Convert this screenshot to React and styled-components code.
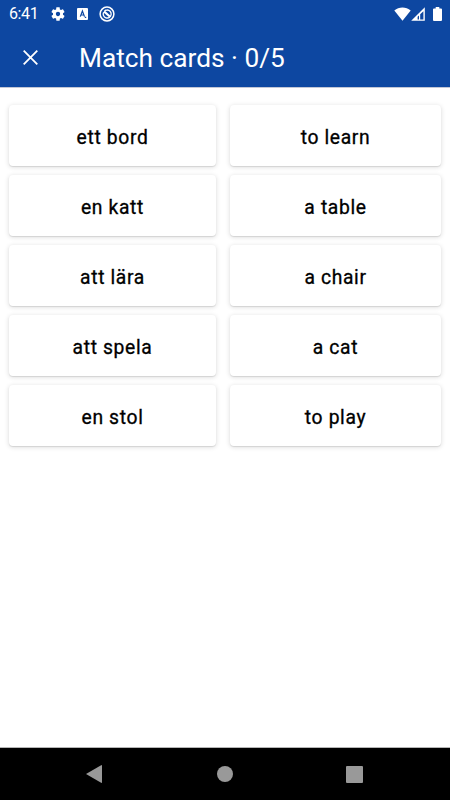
import styled, { createGlobalStyle } from "styled-components";

const pairs = [
  ["ett bord", "to learn"],
  ["en katt", "a table"],
  ["att lära", "a chair"],
  ["att spela", "a cat"],
  ["en stol", "to play"],
];

export default function App() {
  return (
    <>
      <GlobalStyle />
      <Screen>
        <StatusBar>
          <Clock>6:41</Clock>
          <Notifications>
            <svg width="16" height="16" viewBox="0 0 24 24" fill="#fff">
              <path d="M19.43 12.98c.04-.32.07-.64.07-.98s-.03-.66-.07-.98l2.11-1.65c.19-.15.24-.42.12-.64l-2-3.46c-.12-.22-.39-.3-.61-.22l-2.49 1c-.52-.4-1.08-.73-1.69-.98l-.38-2.65C14.46 2.18 14.25 2 14 2h-4c-.25 0-.46.18-.49.42l-.38 2.65c-.61.25-1.17.59-1.69.98l-2.49-1c-.23-.09-.49 0-.61.22l-2 3.46c-.13.22-.07.49.12.64l2.11 1.65c-.04.32-.07.65-.07.98s.03.66.07.98l-2.11 1.65c-.19.15-.24.42-.12.64l2 3.46c.12.22.39.3.61.22l2.49-1c.52.4 1.08.73 1.69.98l.38 2.65c.03.24.24.42.49.42h4c.25 0 .46-.18.49-.42l.38-2.65c.61-.25 1.17-.59 1.69-.98l2.49 1c.23.09.49 0 .61-.22l2-3.46c.12-.22.07-.49-.12-.64l-2.11-1.65zM12 15.2c-1.77 0-3.2-1.43-3.2-3.2s1.43-3.2 3.2-3.2 3.2 1.43 3.2 3.2-1.43 3.2-3.2 3.2z" />
            </svg>
            <svg width="11" height="12" viewBox="0 0 11 12">
              <rect width="11" height="12" rx="1" fill="#fff" />
              <path d="M3.3 8.6 5.4 3 7.5 8.6M4 7H6.8M7.8 9.4h1.4" fill="none" stroke="#0d47a1" strokeWidth="1.2" />
            </svg>
            <svg width="16" height="16" viewBox="0 0 16 16" fill="none" stroke="#fff">
              <circle cx="8" cy="8" r="6.9" strokeWidth="1.5" />
              <path d="M4.6 6.2A4 4 0 1 0 8 4c-1 0-1.8.3-2.5.8" strokeWidth="1.3" />
              <path d="m5 5.4 5.8 5.1" strokeWidth="2.2" />
            </svg>
          </Notifications>
          <Signals>
            <svg width="17" height="14" viewBox="0 0 17 14" fill="#fff">
              <path d="M.3 3.6C4.9-.4 12.1-.4 16.7 3.6L8.5 13.7z" />
            </svg>
            <svg width="14" height="14" viewBox="0 0 14 14">
              <path fillRule="evenodd" d="M.2 13.7 13.8.2v13.5zM8 12.4V8.4L6.6 9.8v2.6zM9.2 12.4h3.2V4.2L9.2 7.2z" fill="#fff" />
            </svg>
            <Battery width="9" height="14" viewBox="0 0 9 14" fill="#fff">
              <path d="M2.7 0h3.6v1.4H8q1 0 1 1V13q0 1-1 1H1q-1 0-1-1V2.4q0-1 1-1h1.7z" />
            </Battery>
          </Signals>
        </StatusBar>
        <Toolbar>
          <CloseButton aria-label="Close">
            <svg width="15" height="15" viewBox="0 0 15 15" stroke="#fff" strokeWidth="1.8">
              <path d="m.7.7 13.6 13.6M14.3.7.7 14.3" />
            </svg>
          </CloseButton>
          <Title>Match cards · 0/5</Title>
        </Toolbar>
        <Board>
          {pairs.flat().map((word) => (
            <Card key={word}>{word}</Card>
          ))}
        </Board>
        <NavBar>
          <svg width="17" height="18" viewBox="0 0 17 18" fill="#999">
            <path d="M0 9 15.1.2q.9-.4.9.5v16.6q0 .9-.9.5z" />
          </svg>
          <HomeDot />
          <RecentsSquare />
        </NavBar>
      </Screen>
    </>
  );
}

const GlobalStyle = createGlobalStyle`
  * {
    box-sizing: border-box;
  }
  body {
    margin: 0;
    font-family: Roboto, sans-serif;
  }
`;

const Screen = styled.div`
  display: flex;
  flex-direction: column;
  width: 450px;
  height: 800px;
  overflow: hidden;
  background-color: #fff;
`;

const StatusBar = styled.div`
  display: flex;
  align-items: center;
  height: 27px;
  padding: 0 8px 0 9px;
  color: #fff;
  background-color: #0d47a1;
`;

const Clock = styled.span`
  width: 41px;
  font-size: 16px;
  line-height: 27px;
  letter-spacing: -0.4px;
`;

const Notifications = styled.div`
  display: flex;
  align-items: center;
  gap: 11px;
`;

const Signals = styled.div`
  display: flex;
  align-items: center;
  margin-left: auto;
`;

const Battery = styled.svg`
  margin-left: 8px;
`;

const Toolbar = styled.header`
  display: flex;
  align-items: center;
  flex-shrink: 0;
  height: 60px;
  padding-left: 23px;
  color: #fff;
  background-color: #0d47a1;
  box-shadow: 0 1px 0 rgba(13, 30, 90, 0.25);
`;

const CloseButton = styled.button`
  all: unset;
  display: flex;
  width: 56px;
`;

const Title = styled.h1`
  margin: 0;
  padding-top: 1px;
  font-size: 26.25px;
  font-weight: 400;
  line-height: 32px;
  white-space: nowrap;
`;

const Board = styled.main`
  display: grid;
  grid-template-columns: 207px 211px;
  grid-auto-rows: 61px;
  align-content: start;
  gap: 9px 14px;
  flex: 1;
  padding: 18px 9px;
`;

const Card = styled.div`
  display: flex;
  align-items: center;
  justify-content: center;
  padding-top: 3px;
  color: #000;
  font-size: 19.3px;
  font-weight: 400;
  letter-spacing: 0.65px;
  -webkit-text-stroke: 0.3px #000;
  background-color: #fff;
  border-radius: 4px;
  box-shadow: 0 1px 1px rgba(0, 0, 0, 0.1), 0 1px 4px 1px rgba(0, 0, 0, 0.1);
`;

const NavBar = styled.nav`
  display: flex;
  align-items: center;
  justify-content: space-between;
  height: 53px;
  padding: 0 87px 0 86px;
  background-color: #000;
  border-top: 1px solid #b5b5b5;
`;

const HomeDot = styled.div`
  width: 16px;
  height: 16px;
  background-color: #999;
  border-radius: 50%;
`;

const RecentsSquare = styled.div`
  width: 17px;
  height: 17px;
  background-color: #999;
  border-radius: 1px;
`;
